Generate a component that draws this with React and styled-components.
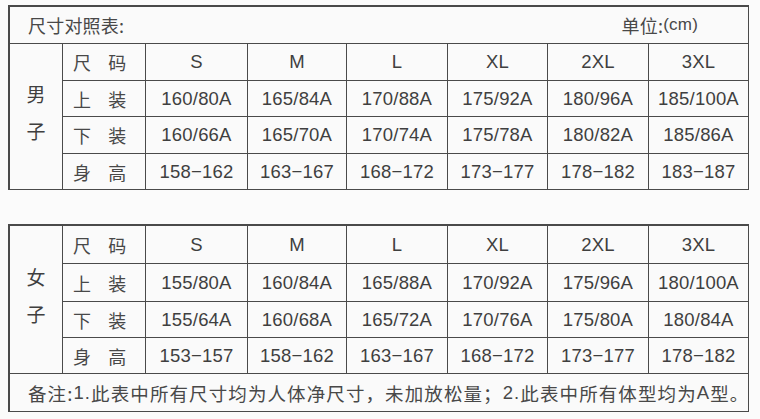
import React from "react";
import styled, { createGlobalStyle } from "styled-components";

const GlobalStyle = createGlobalStyle`
  html, body {
    margin: 0;
    padding: 0;
    background: #fbfbfb;
  }
  body {
    font-family: "Liberation Sans", "Noto Sans CJK SC", sans-serif;
    color: #3f3f3f;
  }
`;

const Page = styled.div`
  width: 760px;
  height: 419px;
  padding: 5px 11px 0 8px;
  box-sizing: border-box;
  display: flex;
  flex-direction: column;
  gap: 34px;
`;

/* one size chart block: gender column + label column + 6 sizes */
const Chart = styled.div`
  display: grid;
  grid-template-columns: 53px 83px 102px 99px 101px 100px 101px 1fr;
  grid-template-rows: ${(p) => p.rows};
  border-top: 2px solid #4a4a4a;
  border-left: 2px solid #4a4a4a;
  background: #fafafa;
`;

const Cell = styled.div`
  display: flex;
  align-items: center;
  justify-content: center;
  border-right: 1.5px solid #4a4a4a;
  border-bottom: 1.5px solid #4a4a4a;
  font-size: 18.5px;
  letter-spacing: 0.2px;
  white-space: nowrap;
`;

const TitleCell = styled(Cell)`
  grid-column: 1 / -1;
  justify-content: space-between;
  padding: 0 50px 0 18px;
  font-family: "Noto Sans CJK SC", sans-serif;
  font-size: 18px;
  color: #484848;
`;

const Unit = styled.span`
  display: inline-flex;
  align-items: center;
  font-size: 18px;
  span {
    font-family: "Liberation Sans", sans-serif;
    font-size: 17px;
  }
`;

const GenderCell = styled(Cell)`
  grid-row: span 4;
  flex-direction: column;
  gap: 14px;
  padding-bottom: 8px;
  font-family: "Noto Sans CJK SC", sans-serif;
  font-size: 19px;
  line-height: 1.2;
`;

const LabelCell = styled(Cell)`
  justify-content: flex-start;
  padding-left: 10px;
  gap: 17px;
  font-family: "Noto Sans CJK SC", sans-serif;
  font-size: 18px;
  color: #484848;
`;

const NoteCell = styled(Cell)`
  grid-column: 1 / -1;
  justify-content: flex-start;
  padding-left: 18px;
  font-family: "Noto Sans CJK SC", sans-serif;
  font-size: 18.5px;
  color: #484848;
  letter-spacing: 1.1px;
`;

const Latin = styled.span`
  font-family: "Liberation Sans", sans-serif;
`;

const sizes = ["S", "M", "L", "XL", "2XL", "3XL"];

const men = [
  ["上", "装", ["160/80A", "165/84A", "170/88A", "175/92A", "180/96A", "185/100A"]],
  ["下", "装", ["160/66A", "165/70A", "170/74A", "175/78A", "180/82A", "185/86A"]],
  ["身", "高", ["158−162", "163−167", "168−172", "173−177", "178−182", "183−187"]],
];

const women = [
  ["上", "装", ["155/80A", "160/84A", "165/88A", "170/92A", "175/96A", "180/100A"]],
  ["下", "装", ["155/64A", "160/68A", "165/72A", "170/76A", "175/80A", "180/84A"]],
  ["身", "高", ["153−157", "158−162", "163−167", "168−172", "173−177", "178−182"]],
];

const Rows = ({ gender, data }) => (
  <>
    <GenderCell>
      <span>{gender[0]}</span>
      <span>{gender[1]}</span>
    </GenderCell>
    <LabelCell>
      <span>尺</span>
      <span>码</span>
    </LabelCell>
    {sizes.map((s) => (
      <Cell key={s}>{s}</Cell>
    ))}
    {data.map(([a, b, values]) => (
      <React.Fragment key={a}>
        <LabelCell>
          <span>{a}</span>
          <span>{b}</span>
        </LabelCell>
        {values.map((v, i) => (
          <Cell key={i}>{v}</Cell>
        ))}
      </React.Fragment>
    ))}
  </>
);

export default function App() {
  return (
    <>
      <GlobalStyle />
      <Page>
        <Chart rows="37px 37px 36px 37px 36px">
          <TitleCell>
            <span>尺寸对照表:</span>
            <Unit>
              单位:<span>(cm)</span>
            </Unit>
          </TitleCell>
          <Rows gender={["男", "子"]} data={men} />
        </Chart>
        <Chart rows="38px 38px 36px 36px 38px">
          <Rows gender={["女", "子"]} data={women} />
          <NoteCell>
            备注:<Latin>1.</Latin>此表中所有尺寸均为人体净尺寸，未加放松量；<Latin>2.</Latin>此表中所有体型均为
            <Latin>A</Latin>型。
          </NoteCell>
        </Chart>
      </Page>
    </>
  );
}
